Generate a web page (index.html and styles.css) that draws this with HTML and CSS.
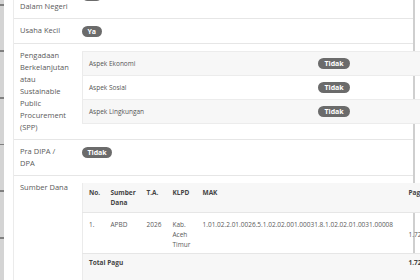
FILE: index.html
```html
<!DOCTYPE html>
<html lang="id">
<head>
<meta charset="utf-8">
<title>Detail Paket</title>
<link rel="stylesheet" href="styles.css">
</head>
<body>
<div class="screen">
  <div class="rail"></div>
  <div class="panel">
    <div class="row">
      <div class="label">Produk<br>Dalam Negeri</div>
      <div class="value"><span class="badge">Ya</span></div>
    </div>
    <div class="row">
      <div class="label">Usaha Kecil</div>
      <div class="value"><span class="badge">Ya</span></div>
    </div>
    <div class="row">
      <div class="label">Pengadaan Berkelanjutan atau Sustainable Public Procurement (SPP)</div>
      <div class="value">
        <table class="spp">
          <tr><td class="aspek">Aspek Ekonomi</td><td class="status"><span class="badge">Tidak</span></td></tr>
          <tr><td class="aspek">Aspek Sosial</td><td class="status"><span class="badge">Tidak</span></td></tr>
          <tr><td class="aspek">Aspek Lingkungan</td><td class="status"><span class="badge">Tidak</span></td></tr>
        </table>
      </div>
    </div>
    <div class="row">
      <div class="label">Pra DIPA / DPA</div>
      <div class="value"><span class="badge">Tidak</span></div>
    </div>
    <div class="row">
      <div class="label">Sumber Dana</div>
      <div class="value">
        <table class="dana">
          <colgroup>
            <col class="c-no"><col class="c-sd"><col class="c-ta"><col class="c-klpd"><col class="c-mak"><col class="c-pagu">
          </colgroup>
          <thead>
            <tr><th>No.</th><th>Sumber Dana</th><th>T.A.</th><th>KLPD</th><th>MAK</th><th>Pagu</th></tr>
          </thead>
          <tbody>
            <tr class="data">
              <td>1.</td><td>APBD</td><td>2026</td><td>Kab. Aceh Timur</td>
              <td>1.01.02.2.01.0026.5.1.02.02.001.00031.8.1.02.02.01.0031.00008</td>
              <td class="pagu">1.725.000.000</td>
            </tr>
            <tr class="total">
              <td colspan="5">Total Pagu</td><td>1.725.000.000</td>
            </tr>
          </tbody>
        </table>
      </div>
    </div>
  </div>
</div>
</body>
</html>
```
FILE: styles.css
```css
html, body {
  margin: 0;
  padding: 0;
  background: #ffffff;
  overflow: hidden;
}

body {
  font-family: "Open Sans", "Noto Sans", sans-serif;
  color: #555555;
  width: 420px;
  height: 280px;
}

.screen {
  display: flex;
  align-items: flex-start;
  height: 280px;
}

.rail {
  flex: none;
  width: 4px;
  height: 280px;
  background: repeating-linear-gradient(
    to bottom,
    #d4d4d4 0px, #d4d4d4 4px,
    #808080 4px, #808080 6px,
    #d4d4d4 6px, #d4d4d4 46.5px
  );
}

.panel {
  flex: none;
  margin-left: 9px;
  margin-top: -17px;
  width: 399px;
  border-left: 1px solid #ebebeb;
  border-right: 2px solid #cfcfcf;
}

.row {
  display: grid;
  grid-template-columns: 68px minmax(0, 1fr);
  border-bottom: 1px solid #e6e6e6;
}

.label {
  padding: 5px 11px 6px 6px;
  font-size: 7.5px;
  line-height: 12px;
  color: #5a5a5a;
}

.value {
  padding: 7px 0 5px;
  line-height: 12px;
  font-size: 7px;
}

.badge {
  display: inline-block;
  vertical-align: top;
  background: #6b6b6b;
  color: #ffffff;
  font-weight: 700;
  font-size: 7px;
  line-height: 11px;
  padding: 0 5.5px;
  border-radius: 6px;
}

.spp {
  width: 345px;
  border-collapse: collapse;
  border-left: 1px solid #ebebeb;
}

.spp td {
  height: 23px;
  padding: 0;
  border-top: 1px solid #ececec;
  border-bottom: 1px solid #ececec;
  vertical-align: middle;
}

.spp tr:nth-child(odd) td {
  background: #f7f7f7;
}

.spp .aspek {
  width: 224px;
  padding-left: 6px;
  font-size: 6.5px;
  color: #555555;
}

.spp .status {
  padding-left: 5px;
}

.spp .status .badge {
  vertical-align: middle;
  padding: 0 6.5px;
}

.dana {
  width: 380px;
  table-layout: fixed;
  border-collapse: collapse;
  border-left: 1px solid #ebebeb;
  font-size: 6.5px;
  line-height: 10px;
  color: #5a5a5a;
}

.c-no { width: 22px; }
.c-sd { width: 36px; }
.c-ta { width: 26px; }
.c-klpd { width: 30px; }
.c-mak { width: 206px; }
.c-pagu { width: 60px; }

.dana th {
  background: #f7f7f7;
  text-align: left;
  font-weight: 700;
  color: #444444;
  padding: 5px 6px 4px;
  vertical-align: top;
  border-bottom: 1px solid #e6e6e6;
}

.dana td {
  padding: 7px 6px 3px;
  vertical-align: top;
  white-space: normal;
}

.dana .data td {
  border-bottom: 1px solid #e6e6e6;
}

.dana .data td:nth-child(5) {
  white-space: nowrap;
  padding-right: 0;
}

.dana .pagu {
  vertical-align: middle;
  white-space: nowrap;
}

.dana .total td {
  background: #f7f7f7;
  font-weight: 700;
  color: #444444;
  padding: 4px 6px 14px;
  white-space: nowrap;
}
```
